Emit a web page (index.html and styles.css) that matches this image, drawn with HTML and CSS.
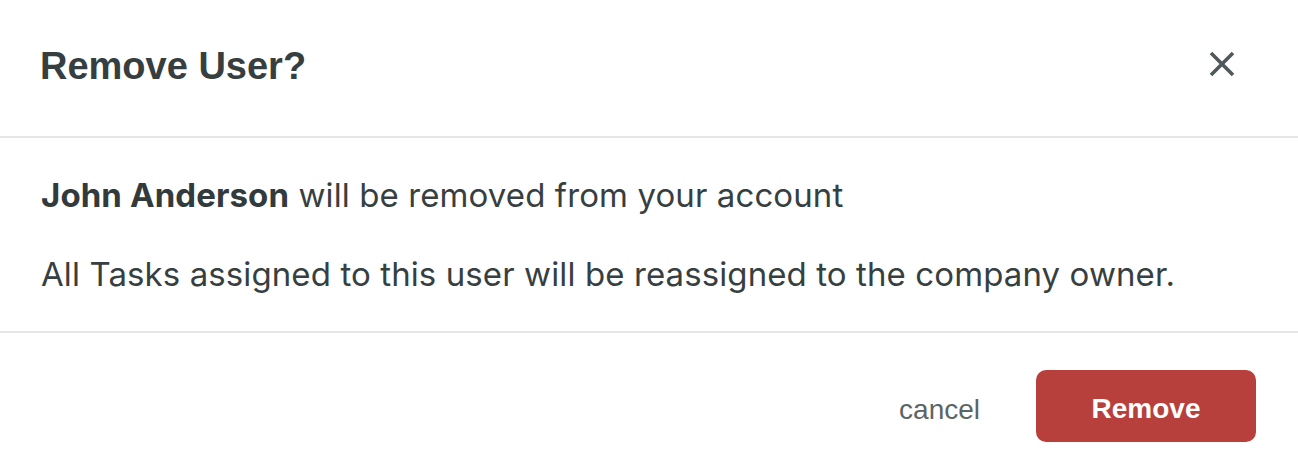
FILE: index.html
```html
<html>
  <head>
    <title>Remove User</title>
    <link rel="stylesheet" href="styles.css">
  </head>
  <body>
    <div class="modal">
      <div class="modal-header">
        <h2 class="modal-title">Remove User?</h2>
        <button class="close" aria-label="Close">
          <svg width="26" height="26" viewBox="0 0 26 26">
            <path d="M2 2 L24 24 M24 2 L2 24" stroke="#4f585a" stroke-width="3.6" fill="none"/>
          </svg>
        </button>
      </div>
      <div class="modal-body">
        <p><b>John Anderson</b> will be removed from your account</p>
        <p>All Tasks assigned to this user will be reassigned to the company owner.</p>
      </div>
      <div class="modal-footer">
        <a class="cancel" href="#">cancel</a>
        <button class="btn-remove">Remove</button>
      </div>
    </div>
  </body>
</html>
```

FILE: styles.css
```css
body {
    margin: 0;
    padding: 0;
    background: #fff;
    font-family: "Liberation Sans", Arial, sans-serif;
    color: #373f41;
    overflow: hidden;
}

.modal {
    width: 100%;
}

.modal-header {
    display: flex;
    align-items: center;
    justify-content: space-between;
    padding: 42px 63px 46px 40px;
    border-bottom: 2px solid #e4e6e6;
}

.modal-title {
    margin: 0;
    font-size: 38px;
    line-height: 48px;
    font-weight: bold;
    color: #363e40;
}

.close {
    background: none;
    border: 0;
    padding: 0;
    margin-top: -4px;
    display: flex;
    cursor: pointer;
}

.modal-body {
    padding: 33px 40px 33px 41px;
    border-bottom: 2px solid #e4e6e6;
}

.modal-body p {
    margin: 0;
    font-family: Inter, "Liberation Sans", sans-serif;
    font-size: 33px;
    line-height: 48px;
    letter-spacing: 0.1px;
}

.modal-body p + p {
    margin-top: 31px;
}

.modal-body b {
    font-weight: 700;
    color: #323a3c;
}

.modal-footer {
    display: flex;
    justify-content: flex-end;
    align-items: center;
    gap: 56px;
    padding: 37px 42px 28px;
}

.cancel {
    font-size: 28px;
    color: #5b6567;
    text-decoration: none;
    margin-top: 8px;
}

.btn-remove {
    width: 220px;
    height: 72px;
    padding-top: 6px;
    border: 0;
    border-radius: 10px;
    background: #b8403c;
    color: #fff;
    font-family: "Liberation Sans", Arial, sans-serif;
    font-size: 28px;
    font-weight: bold;
    cursor: pointer;
}
```
